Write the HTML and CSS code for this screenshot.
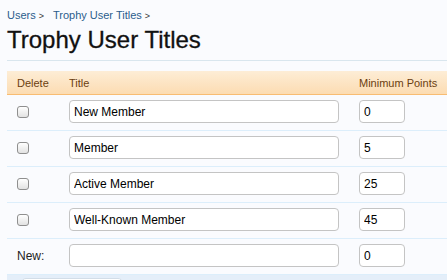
FILE: index.html
```html
<!DOCTYPE html>
<html>
<head>
<title>Trophy User Titles</title>
<link rel="stylesheet" href="styles.css">
</head>
<body>
<div class="page">
  <div class="breadcrumb">
    <a href="#">Users</a> <span class="sep">&gt;</span>
    <a href="#" class="crumb">Trophy User Titles</a> <span class="sep">&gt;</span>
  </div>
  <h1>Trophy User Titles</h1>

  <form>
    <table class="titles">
      <thead>
        <tr>
          <th class="col-delete">Delete</th>
          <th class="col-title">Title</th>
          <th class="col-points">Minimum Points</th>
        </tr>
      </thead>
      <tbody>
        <tr>
          <td class="col-delete"><input type="checkbox" class="check"></td>
          <td class="col-title"><input type="text" class="text-box" value="New Member"></td>
          <td class="col-points"><input type="text" class="points-box" value="0"></td>
        </tr>
        <tr>
          <td class="col-delete"><input type="checkbox" class="check"></td>
          <td class="col-title"><input type="text" class="text-box" value="Member"></td>
          <td class="col-points"><input type="text" class="points-box" value="5"></td>
        </tr>
        <tr>
          <td class="col-delete"><input type="checkbox" class="check"></td>
          <td class="col-title"><input type="text" class="text-box" value="Active Member"></td>
          <td class="col-points"><input type="text" class="points-box" value="25"></td>
        </tr>
        <tr>
          <td class="col-delete"><input type="checkbox" class="check"></td>
          <td class="col-title"><input type="text" class="text-box" value="Well-Known Member"></td>
          <td class="col-points"><input type="text" class="points-box" value="45"></td>
        </tr>
        <tr>
          <td class="col-delete new-label">New:</td>
          <td class="col-title"><input type="text" class="text-box" value=""></td>
          <td class="col-points"><input type="text" class="points-box" value="0"></td>
        </tr>
      </tbody>
    </table>
    <div class="submit-bar">
      <div class="button"></div>
    </div>
  </form>
</div>
</body>
</html>
```

FILE: styles.css
```css
body {
  font-family: "Liberation Sans", Arial, sans-serif;
  background-color: #fafbfe;
  margin: 0;
  padding: 0;
  overflow: hidden;
}

.page {
  padding: 8px 0 0 7px;
}

.breadcrumb {
  font-size: 11px;
  line-height: 14px;
  color: #2b5d8c;
}

.breadcrumb a {
  color: #2b5d8c;
  text-decoration: none;
}

.breadcrumb .sep {
  font-size: 9px;
  color: #333;
  margin-right: 6px;
}

h1 {
  font-size: 24px;
  font-weight: normal;
  color: #111;
  -webkit-text-stroke: 0.3px #111;
  margin: 0;
  padding: 5px 0 8px;
  line-height: 24px;
  border-bottom: 1px solid #d9e6ee;
}

form {
  margin-top: 10px;
}

.titles {
  width: 440px;
  table-layout: fixed;
  border-collapse: collapse;
  font-size: 12px;
}

.titles th {
  height: 23px;
  padding: 0 10px;
  text-align: left;
  font-weight: normal;
  font-size: 11px;
  white-space: nowrap;
  color: #6b3e10;
  background: linear-gradient(to bottom, #fdedd6, #fcdcb2);
  border-bottom: 1px solid #f8bc72;
}

.titles td {
  padding: 5px 10px 7px;
  border-bottom: 1px solid #dceefb;
  vertical-align: middle;
}

.col-delete {
  width: 32px;
}

.col-title {
  width: 270px;
}

.new-label {
  color: #222;
}

.check {
  appearance: none;
  display: block;
  width: 12px;
  height: 12px;
  margin: 0;
  border: 1px solid #8f8f8f;
  border-radius: 3px;
  background: linear-gradient(to bottom, #ffffff, #e2e2e2);
  box-sizing: border-box;
}

.text-box,
.points-box {
  display: block;
  height: 23px;
  margin: 0;
  padding: 0 4px;
  font-family: "Liberation Sans", Arial, sans-serif;
  font-size: 12px;
  color: #000;
  background-color: #fff;
  border: 1px solid #c4c4c4;
  border-radius: 4px;
  box-sizing: border-box;
}

.text-box {
  width: 270px;
}

.points-box {
  width: 46px;
}

.submit-bar {
  background-color: #e4eef9;
  height: 30px;
  padding: 3px 0 0 14px;
  box-sizing: border-box;
}

.button {
  width: 100px;
  height: 22px;
  background-color: #fff;
  border: 1px solid #d2dde8;
  border-radius: 5px;
}
```
